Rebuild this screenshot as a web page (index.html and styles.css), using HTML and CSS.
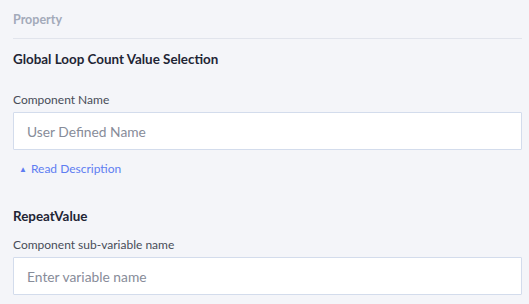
FILE: index.html
```html
<!DOCTYPE html>
<html>
<head>
<meta charset="utf-8">
<link rel="stylesheet" href="styles.css">
</head>
<body>
<div class="panel">
  <div class="panel-header">Property</div>
  <div class="section-title">Global Loop Count Value Selection</div>
  <div class="field">
    <label class="field-label">Component Name</label>
    <input class="field-input" type="text" placeholder="User Defined Name">
  </div>
  <a class="read-more"><span class="caret">&#9650;</span>Read Description</a>
  <div class="section-title repeat">RepeatValue</div>
  <div class="field sub">
    <label class="field-label">Component sub-variable name</label>
    <input class="field-input" type="text" placeholder="Enter variable name">
  </div>
</div>
</body>
</html>
```
FILE: styles.css
```css
html, body {
  margin: 0;
  padding: 0;
  background: #f4f5f9;
}
body {
  font-family: Lato, "Open Sans", sans-serif;
}
.panel {
  padding: 0 7px 0 13px;
  display: flex;
  flex-direction: column;
}
.panel-header {
  padding: 12px 0 10px;
  line-height: 16px;
  font-size: 12.5px;
  font-weight: 700;
  color: #a3aaba;
  border-bottom: 1px solid #e1e4ec;
}
.section-title {
  margin-top: 11px;
  line-height: 18px;
  font-size: 13.4px;
  font-weight: 700;
  color: #1f2535;
}
.section-title.repeat {
  margin-top: 31px;
}
.field {
  margin-top: 25px;
  display: flex;
  flex-direction: column;
  gap: 5px;
}
.field.sub {
  margin-top: 13px;
}
.field-label {
  line-height: 14px;
  font-size: 12px;
  color: #474c58;
}
.field-input {
  box-sizing: border-box;
  height: 38px;
  margin: 0;
  padding: 0 13px;
  border: 1px solid #d3dcec;
  border-radius: 1px;
  background: #fff;
  font-family: inherit;
  font-size: 13.8px;
  color: #333;
  outline: none;
}
.field-input::placeholder {
  color: #878c99;
}
.read-more {
  margin-top: 12px;
  align-self: flex-start;
  padding-left: 6px;
  line-height: 14px;
  font-size: 12px;
  color: #5e7df2;
  display: flex;
  align-items: center;
  gap: 4px;
}
.caret {
  font-size: 8px;
}
```
